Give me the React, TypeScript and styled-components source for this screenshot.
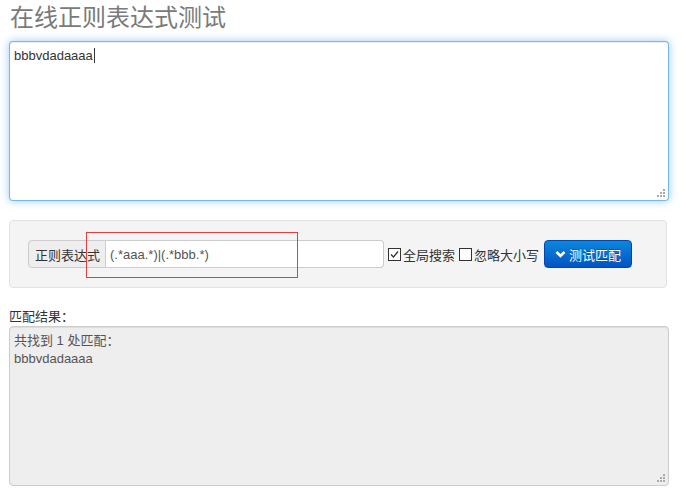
import styled, { createGlobalStyle } from 'styled-components';

const GlobalStyle = createGlobalStyle`
  body {
    margin: 0;
    background: #fff;
    font-family: "Liberation Sans", "Noto Sans CJK SC", sans-serif;
    font-size: 13px;
    color: #333;
  }
`;

const Page = styled.div`
  width: 660px;
  padding: 0 0 0 9px;
  position: relative;
`;

const Title = styled.h1`
  margin: 0 0 5px 1px;
  font-size: 24px;
  font-weight: normal;
  line-height: 36px;
  color: #7a7a7a;
`;

const AreaWrap = styled.div`
  position: relative;
  width: 660px;
  height: 160px;
`;

const Area = styled.textarea<{ muted?: boolean }>`
  display: block;
  box-sizing: border-box;
  width: 660px;
  height: 160px;
  margin: 0;
  padding: 5px 4px;
  resize: none;
  font-family: inherit;
  font-size: 13px;
  line-height: 18px;
  color: ${({ muted }) => (muted ? '#555' : '#333')};
  background: ${({ muted }) => (muted ? '#eeeeee' : '#fff')};
  border: 1px solid ${({ muted }) => (muted ? '#ccc' : 'rgba(82, 168, 236, 0.8)')};
  border-radius: 4px;
  box-shadow: ${({ muted }) =>
    muted
      ? 'inset 0 1px 1px rgba(0,0,0,0.075)'
      : 'inset 0 1px 1px rgba(0,0,0,0.075), 0 0 8px rgba(82, 168, 236, 0.6)'};
  outline: none;
`;

const Grip = styled.svg`
  position: absolute;
  right: 4px;
  bottom: 4px;
`;

const Caret = styled.span`
  position: absolute;
  left: 85px;
  top: 7px;
  width: 1px;
  height: 15px;
  background: #333;
`;

const Well = styled.div`
  box-sizing: border-box;
  width: 658px;
  height: 68px;
  margin-top: 19px;
  padding: 19px 18px;
  background: #f4f4f4;
  border: 1px solid #e3e3e3;
  border-radius: 4px;
  display: flex;
  align-items: center;
`;

const Group = styled.div`
  display: flex;
  height: 28px;
`;

const Addon = styled.span`
  box-sizing: border-box;
  height: 28px;
  padding: 0 5px 0 6px;
  display: flex;
  align-items: center;
  background: #eee;
  border: 1px solid #ccc;
  border-radius: 4px 0 0 4px;
  color: #333;
`;

const Input = styled.div`
  box-sizing: border-box;
  width: 278px;
  height: 28px;
  padding: 0 4px;
  display: flex;
  align-items: center;
  background: #fff;
  border: 1px solid #ccc;
  border-left: none;
  border-radius: 0 4px 4px 0;
  color: #555;
`;

const Check = styled.label`
  display: flex;
  align-items: center;
  gap: 2px;
  margin-left: 4px;
  color: #333;
`;

const Box = styled.span`
  box-sizing: border-box;
  width: 13px;
  height: 13px;
  border: 1px solid #333;
  background: #fff;
  display: flex;
  align-items: center;
  justify-content: center;
`;

const Button = styled.button`
  box-sizing: border-box;
  margin-left: 5px;
  height: 28px;
  width: 88px;
  padding: 0;
  display: flex;
  align-items: center;
  justify-content: center;
  gap: 3px;
  font-family: inherit;
  font-size: 13px;
  color: #fff;
  text-shadow: 0 -1px 0 rgba(0, 0, 0, 0.25);
  background: linear-gradient(#0a88dc, #0453c4);
  border: 1px solid #0048b0;
  border-radius: 4px;
`;

const Label = styled.div`
  margin-top: 20px;
  line-height: 18px;
  color: #333;
`;

const Mark = styled.div`
  position: absolute;
  left: 86px;
  top: 232px;
  width: 210px;
  height: 44px;
  border: 1px solid #f03a3a;
`;

const GripDots = () => (
  <Grip width="8" height="8" viewBox="0 0 8 8">
    <g fill="#aaa">
      <rect x="6" y="0" width="2" height="2" />
      <rect x="3" y="3" width="2" height="2" />
      <rect x="6" y="3" width="2" height="2" />
      <rect x="0" y="6" width="2" height="2" />
      <rect x="3" y="6" width="2" height="2" />
      <rect x="6" y="6" width="2" height="2" />
    </g>
  </Grip>
);

export default function App() {
  return (
    <>
      <GlobalStyle />
      <Page>
        <Title>在线正则表达式测试</Title>
        <AreaWrap>
          <Area defaultValue="bbbvdadaaaa" />
          <Caret />
          <GripDots />
        </AreaWrap>
        <Well>
          <Group>
            <Addon>正则表达式</Addon>
            <Input>(.*aaa.*)|(.*bbb.*)</Input>
          </Group>
          <Check>
            <Box>
              <svg width="11" height="11" viewBox="0 0 11 11">
                <path d="M2 5.5 L4.5 8 L9 2.5" fill="none" stroke="#333" strokeWidth="1.3" />
              </svg>
            </Box>
            全局搜索
          </Check>
          <Check>
            <Box />
            忽略大小写
          </Check>
          <Button>
            <svg width="11" height="9" viewBox="0 0 11 9">
              <path d="M1.5 2 L5.5 6 L9.5 2" fill="none" stroke="#fff" strokeWidth="2.6" />
            </svg>
            测试匹配
          </Button>
        </Well>
        <Label>匹配结果：</Label>
        <AreaWrap>
          <Area muted readOnly defaultValue={'共找到 1 处匹配：\nbbbvdadaaaa'} />
          <GripDots />
        </AreaWrap>
        <Mark />
      </Page>
    </>
  );
}
